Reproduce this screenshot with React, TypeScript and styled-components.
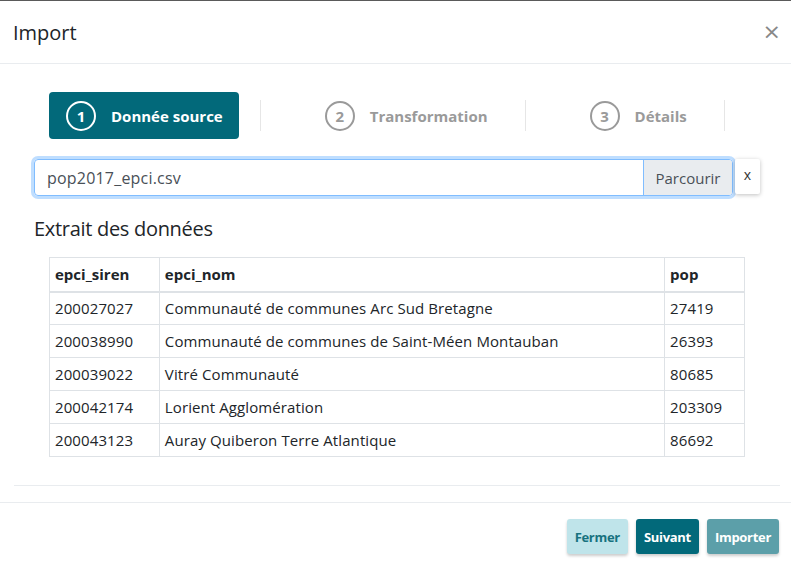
import React from "react";
import styled, { createGlobalStyle } from "styled-components";

const Global = createGlobalStyle`
  html, body { margin: 0; padding: 0; background: #fff; }
  body { font-family: "Open Sans", "Noto Sans", sans-serif; color: #212529; }
  * { box-sizing: border-box; }
`;

const TEAL = "#02697a";

const Modal = styled.div`
  width: 791px;
  height: 564px;
  border-top: 1px solid #5a5a5a;
  display: flex;
  flex-direction: column;
  background: #fff;
`;

const Header = styled.div`
  height: 63px;
  display: flex;
  align-items: center;
  justify-content: space-between;
  padding: 0 10px 0 13px;
  border-bottom: 1px solid #e9ecef;
`;

const Title = styled.h1`
  margin: 0;
  font-size: 20px;
  font-weight: 400;
  color: #212529;
  letter-spacing: 0;
`;

const Close = styled.button`
  border: 0;
  background: none;
  padding: 0;
  color: #888;
  font-size: 22px;
  line-height: 1;
  font-family: "DejaVu Sans", sans-serif;
  margin-top: -1px;
`;

const Body = styled.div`
  padding: 28px 11px 0 14px;
  flex: 1;
`;

const Stepper = styled.div`
  display: flex;
  align-items: center;
  padding-left: 35px;
`;

const Step = styled.div<{ $active?: boolean }>`
  height: 47px;
  display: flex;
  align-items: center;
  padding: 0 16px 0 17px;
  border-radius: 4px;
  background: ${(p) => (p.$active ? TEAL : "transparent")};
  color: ${(p) => (p.$active ? "#fff" : "#9a9a9a")};
  font-weight: 700;
  font-size: 15px;
  letter-spacing: 0;
`;

const Circle = styled.span<{ $active?: boolean }>`
  width: 30px;
  height: 30px;
  border-radius: 50%;
  border: 2px solid ${(p) => (p.$active ? "#fff" : "#9a9a9a")};
  display: inline-flex;
  align-items: center;
  justify-content: center;
  margin-right: 15px;
  font-size: 15px;
`;

const Sep = styled.div`
  width: 1px;
  height: 31px;
  background: #e6e6e6;
  margin: 0 47px 0 21px;
`;

const FileRow = styled.div`
  display: flex;
  align-items: flex-start;
  margin: 20px 0 0 20px;
`;

const InputGroup = styled.div`
  width: 699px;
  height: 37px;
  display: flex;
  border: 1px solid #80bdff;
  border-radius: 4px;
  box-shadow: 0 0 0 3px rgba(0, 123, 255, 0.25);
  overflow: hidden;
`;

const FileName = styled.div`
  flex: 1;
  display: flex;
  align-items: center;
  padding: 0 12px;
  font-size: 16px;
  letter-spacing: 0.2px;
  color: #495057;
`;

const Browse = styled.div`
  width: 89px;
  display: flex;
  align-items: center;
  justify-content: center;
  background: #e9ecef;
  border-left: 1px solid #80bdff;
  font-size: 15px;
  color: #495057;
`;

const ClearBtn = styled.button`
  margin-left: 2px;
  width: 25px;
  height: 35px;
  border: 0;
  background: #fff;
  box-shadow: 0 1px 4px rgba(0, 0, 0, 0.25);
  border-radius: 2px;
  font-family: "Open Sans", sans-serif;
  font-size: 14px;
  color: #333;
  padding: 0 0 4px 0;
`;

const Heading = styled.h5`
  margin: 21px 0 0 20px;
  font-size: 20px;
  font-weight: 500;
  color: #212529;
  line-height: 24px;
  letter-spacing: -0.3px;
`;

const Table = styled.table`
  margin: 16px 0 0 35px;
  width: 696px;
  border-collapse: collapse;
  font-size: 15px;
  color: #212529;
`;

const Th = styled.th<{ $w: number }>`
  width: ${(p) => p.$w}px;
  text-align: left;
  font-weight: 700;
  height: 34px;
  padding: 0 5px;
  border: 1px solid #dee2e6;
  border-bottom-width: 2px;
`;

const Td = styled.td`
  height: 33px;
  padding: 0 5px;
  border: 1px solid #dee2e6;
  letter-spacing: 0.1px;
  white-space: nowrap;
`;

const Divider = styled.hr`
  margin: 28px 0 0 0;
  border: 0;
  border-top: 1px solid #e9ecef;
`;

const Footer = styled.div`
  height: 62px;
  border-top: 1px solid #e9ecef;
  display: flex;
  align-items: center;
  justify-content: flex-end;
  gap: 8px;
  padding: 0 12px 0 0;
`;

const Btn = styled.button<{ $variant: "light" | "primary" | "disabled" }>`
  height: 35px;
  padding: 0 8px;
  border: 0;
  border-radius: 3px;
  font-family: "Open Sans", sans-serif;
  font-weight: 700;
  font-size: 13px;
  letter-spacing: -0.3px;
  box-shadow: 0 2px 3px rgba(0, 0, 0, 0.2);
  background: ${(p) =>
    p.$variant === "light" ? "#bfe4ea" : p.$variant === "primary" ? TEAL : "#5c9fa9"};
  color: ${(p) => (p.$variant === "light" ? "#17727f" : "#fff")};
  margin-top: 6px;
`;

const rows = [
  ["200027027", "Communauté de communes Arc Sud Bretagne", "27419"],
  ["200038990", "Communauté de communes de Saint-Méen Montauban", "26393"],
  ["200039022", "Vitré Communauté", "80685"],
  ["200042174", "Lorient Agglomération", "203309"],
  ["200043123", "Auray Quiberon Terre Atlantique", "86692"],
];

export default function App() {
  return (
    <>
      <Global />
      <Modal>
        <Header>
          <Title>Import</Title>
          <Close aria-label="Fermer">×</Close>
        </Header>
        <Body>
          <Stepper>
            <Step $active>
              <Circle $active>1</Circle>Donnée source
            </Step>
            <Sep />
            <Step>
              <Circle>2</Circle>Transformation
            </Step>
            <Sep />
            <Step>
              <Circle>3</Circle>Détails
            </Step>
            <Sep />
          </Stepper>
          <FileRow>
            <InputGroup>
              <FileName>pop2017_epci.csv</FileName>
              <Browse>Parcourir</Browse>
            </InputGroup>
            <ClearBtn>x</ClearBtn>
          </FileRow>
          <Heading>Extrait des données</Heading>
          <Table>
            <thead>
              <tr>
                <Th $w={110}>epci_siren</Th>
                <Th $w={506}>epci_nom</Th>
                <Th $w={80}>pop</Th>
              </tr>
            </thead>
            <tbody>
              {rows.map((r) => (
                <tr key={r[0]}>
                  {r.map((c, i) => (
                    <Td key={i}>{c}</Td>
                  ))}
                </tr>
              ))}
            </tbody>
          </Table>
          <Divider />
        </Body>
        <Footer>
          <Btn $variant="light">Fermer</Btn>
          <Btn $variant="primary">Suivant</Btn>
          <Btn $variant="disabled">Importer</Btn>
        </Footer>
      </Modal>
    </>
  );
}
